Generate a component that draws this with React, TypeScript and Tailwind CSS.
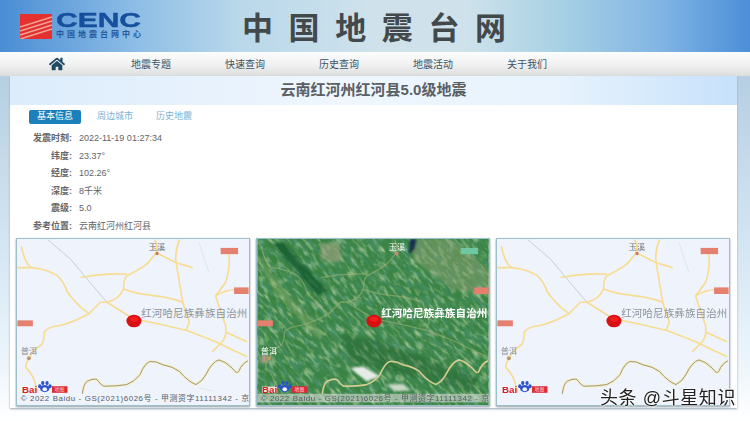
import React from "react";
import { FaHome } from "react-icons/fa";

const cjk = "font-['Liberation_Sans','Noto_Sans_CJK_SC',sans-serif]";

const navItems = ["地震专题", "快速查询", "历史查询", "地震活动", "关于我们"];

const infoRows = [
  { label: "发震时刻:", value: "2022-11-19 01:27:34" },
  { label: "纬度:", value: "23.37°" },
  { label: "经度:", value: "102.26°" },
  { label: "深度:", value: "8千米" },
  { label: "震级:", value: "5.0" },
  { label: "参考位置:", value: "云南红河州红河县" },
];

// roads and borders are in 3x coordinates, traced off the map
const roads = [
  "M60 30 Q70 80 90 95 Q140 100 170 120 Q190 140 200 170 Q230 210 265 235 L300 200 L320 200 Q360 190 370 160 Q370 130 380 120 Q420 100 440 85 L470 50 Q475 30 465 10",
  "M240 125 Q310 110 380 115",
  "M265 235 Q220 260 180 270 Q140 275 130 290 Q130 320 120 330 Q90 350 85 370 Q70 385 75 400 Q95 420 100 440 L110 475",
  "M320 200 L400 250 Q480 265 560 285 Q600 300 650 320 Q700 345 745 365",
  "M370 160 Q410 175 460 180 Q510 185 550 200 Q560 235 570 260 L560 285",
  "M540 10 Q525 50 530 80 Q540 140 550 200 M470 50 L530 80 L580 95",
  "M690 50 Q695 100 680 140 L650 180 Q665 230 680 270 Q685 300 670 320 L640 350",
  "M650 180 Q700 150 745 170 M680 290 L745 320 M48 95 L90 95",
];
const border =
  "M245 478 Q250 445 260 440 Q280 430 290 435 Q300 450 310 455 Q350 455 380 450 Q405 440 420 420 Q435 385 450 380 Q470 378 490 390 Q520 395 540 410 Q565 440 590 450 Q610 440 620 420 Q640 380 660 375 Q680 380 700 400 Q715 420 720 410 Q730 385 748 378";

function BaiduMark({ satellite }: { satellite: boolean }) {
  return (
    <g>
      {satellite && <rect x="62" y="456" width="45" height="19" fill="#e8e4dc" />}
      <text x="62" y="475" fontSize="27" fontWeight="700" fill="#dd1c22" fontFamily="Liberation Sans" textLength="46" lengthAdjust="spacingAndGlyphs">
        Bai
      </text>
      <ellipse cx="131" cy="462" rx="14" ry="11" fill="#2a53c9" />
      <ellipse cx="116" cy="455" rx="5" ry="6" fill="#2a53c9" />
      <ellipse cx="125" cy="445" rx="5" ry="6" fill="#2a53c9" />
      <ellipse cx="138" cy="445" rx="5" ry="6" fill="#2a53c9" />
      <ellipse cx="147" cy="455" rx="5" ry="6" fill="#2a53c9" />
      <ellipse cx="131" cy="464" rx="7" ry="6" fill="#f2f5fb" />
      <rect x="153" y="455" width="47" height="20" fill="#dd2a35" />
      <text x="176" y="471" fontSize="15" fill="#f7d0d0" textAnchor="middle" fontFamily="Noto Sans CJK SC">
        地图
      </text>
    </g>
  );
}

function MapTile({ satellite = false, copyright = true }: { satellite?: boolean; copyright?: boolean }) {
  return (
    <div className="w-[234px] h-[168px] border border-[#9dbfc9] bg-[#eff3fb] overflow-hidden shadow-[0_1px_2px_#8a9aa5]">
      <svg viewBox="48 8 702 504" className="block w-full h-full">
        <defs>
          <filter id="satDark" x="0" y="0" width="100%" height="100%">
            <feTurbulence type="fractalNoise" baseFrequency="0.025 0.08" numOctaves="4" seed="7" />
            <feColorMatrix values="0 0 0 0 0.06  0 0 0 0 0.27  0 0 0 0 0.14  2.4 0 0 0 -0.95" />
          </filter>
          <filter id="satLight" x="0" y="0" width="100%" height="100%">
            <feTurbulence type="fractalNoise" baseFrequency="0.03 0.09" numOctaves="3" seed="23" />
            <feColorMatrix values="0 0 0 0 0.5  0 0 0 0 0.66  0 0 0 0 0.38  1.8 0 0 0 -0.85" />
          </filter>
          <filter id="soft">
            <feGaussianBlur stdDeviation="3" />
          </filter>
        </defs>
        {satellite ? (
          <g>
            <rect x="48" y="8" width="702" height="504" fill="#3a8443" />
            <g transform="rotate(48 400 260)">
              <rect x="-300" y="-400" width="1400" height="1300" filter="url(#satDark)" />
              <rect x="-300" y="-400" width="1400" height="1300" filter="url(#satLight)" />
            </g>
            <g filter="url(#soft)">
              <path d="M90 20 L130 20 L260 165 L230 180 Z" fill="#15592f" opacity="0.75" />
              <path d="M30 30 L120 150 L250 300 L230 310 L100 170 Z" fill="#9db56f" opacity="0.35" />
              <path d="M520 8 L640 8 L750 100 L750 180 L640 160 L520 70 Z" fill="#9aa678" opacity="0.4" />
              <path d="M240 20 L300 20 L300 80 L240 70 Z" fill="#b5a88a" opacity="0.5" />
              <path d="M300 300 L420 320 L720 430 L700 470 L330 380 Z" fill="#17582f" opacity="0.35" />
              <path d="M510 8 L532 8 L525 40 L508 55 Z" fill="#16304e" />
              <path d="M330 400 L370 395 L420 425 L380 440 Z" fill="#e6ece6" />
              <path d="M440 450 L490 448 L515 468 L465 470 Z" fill="#c7d8c5" />
              <path d="M60 360 L75 360 L78 385 L62 385 Z" fill="#b89a86" />
            </g>
            <g stroke="#a9b377" strokeWidth="4" fill="none" opacity="0.55">
              {roads.slice(0, 5).map((d) => (
                <path key={d} d={d} />
              ))}
            </g>
            <path d={border} stroke="#d4cc8f" strokeWidth="5" fill="none" />
          </g>
        ) : (
          <g>
            <path d="M140 10 L210 70 L260 130 L320 200 L390 245" stroke="#bcc6d6" strokeWidth="2.5" fill="none" />
            <path d="M600 20 L630 110 M640 470 L600 460" stroke="#d6deeb" strokeWidth="2" fill="none" />
            <g stroke="#f7dc92" strokeWidth="5" fill="none">
              {roads.map((d) => (
                <path key={d} d={d} />
              ))}
            </g>
            <path d={border} stroke="#f6edc6" strokeWidth="8" fill="none" />
            <path d={border} stroke="#9c9672" strokeWidth="3" fill="none" />
          </g>
        )}

        <rect x="665" y="35" width="53" height="19" fill={satellite ? "#6fc7a0" : "#e5806f"} />
        <rect x="706" y="155" width="44" height="20" fill="#e5806f" />
        <rect x="48" y="255" width="47" height="18" fill="#e5806f" />
        <circle cx="472" cy="52" r="5" fill={satellite ? "#c88a70" : "#d0795f"} />
        <circle cx="83" cy="370" r="6" fill="#b99b6b" />

        <text x="472" y="41" fontSize="25" fill={satellite ? "#fff" : "#6d7478"} textAnchor="middle" fontFamily="Noto Sans CJK SC">
          玉溪
        </text>
        <text x="83" y="357" fontSize="25" fill={satellite ? "#fff" : "#8b959c"} textAnchor="middle" fontFamily="Noto Sans CJK SC">
          普洱
        </text>
        <text x="424" y="244" fontSize="32" fontWeight={satellite ? 700 : 400} fill={satellite ? "#fff" : "#8b959c"} fontFamily="Noto Sans CJK SC" textLength="322">
          红河哈尼族彝族自治州
        </text>

        <ellipse cx="402" cy="257" rx="23" ry="19" fill="#d80f13" />
        <ellipse cx="402" cy="251" rx="13" ry="8" fill="#f21d1d" />

        <BaiduMark satellite={satellite} />
        {copyright && (
          <g>
            {satellite && <rect x="48" y="478" width="702" height="26" fill="#d9dcd6" opacity="0.6" />}
            <text x="58" y="499" fontSize="24" fill="#555c66" fontFamily="Liberation Sans, Noto Sans CJK SC" textLength="694">
              © 2022 Baidu - GS(2021)6026号 - 甲测资字11111342 - 京
            </text>
          </g>
        )}
      </svg>
    </div>
  );
}

export default function App() {
  return (
    <div className={`relative w-[750px] h-[421px] overflow-hidden bg-white blur-[0.4px] ${cjk}`}>
      {/* header */}
      <div className="relative h-[52px] bg-[linear-gradient(90deg,#4a8dd4_0%,#8dbde6_18%,#b9d8ea_32%,#cfe2ec_50%,#cfe2ec_62%,#a9d2e4_74%,#82b5e4_88%,#4b8fd8_100%)]">
        <div className="flex items-center h-full pl-[20px]">
          <div className="w-[32px] h-[25px] rounded-[1px] bg-[#e4312f] overflow-hidden mt-[1px]">
            <svg viewBox="0 0 32 25" className="w-full h-full">
              <path d="M0 13 L32 3 M0 17 L32 7 M0 21 L32 11 M0 25 L32 15" stroke="#f1a498" strokeWidth="1.5" fill="none" />
            </svg>
          </div>
          <div className="ml-[4px] w-[90px]">
            <div className="text-[20px] leading-[15px] font-bold text-[#16509c] origin-left scale-x-[1.5] h-[15px] w-[58px] [-webkit-text-stroke:0.4px_#16509c]">CENC</div>
            <div className="text-[8px] leading-[9px] mt-[2px] text-[#25589a] font-bold tracking-[3px] whitespace-nowrap">中国地震台网中心</div>
          </div>
        </div>
        <div className="absolute top-[3px] left-[242px] text-[31px] leading-[46px] font-bold text-[#43494b] tracking-[15.6px] whitespace-nowrap font-['Noto_Sans_CJK_SC',sans-serif]">
          中国地震台网
        </div>
      </div>

      {/* nav */}
      <div className="flex h-[24px] pl-[10px] items-center bg-[linear-gradient(180deg,#fbfcfc_0%,#f1f2f1_50%,#dcdedd_100%)]">
        <div className="w-[94px] flex justify-center text-[#1f4a63] text-[16px]">
          <FaHome />
        </div>
        {navItems.map((item) => (
          <div key={item} className="w-[94px] text-center text-[10px] text-[#3f5364]">
            {item}
          </div>
        ))}
      </div>

      {/* body */}
      <div className="h-[345px] bg-[linear-gradient(180deg,#b6cfe2_0%,#d5e6f3_50%,#eef6fb_85%,#ffffff_100%)] pl-[10px] pr-[13px]">
        <div className="h-[332px] bg-white shadow-[0_1px_2px_#9aa7b0]">
          <div className="h-[29px] flex items-center justify-center bg-[linear-gradient(90deg,#dcecfb_0%,#eff6fe_45%,#e8f3fd_75%,#c7e1fb_100%)] text-[15px] font-bold text-[#5a5f64]">
            云南红河州红河县5.0级地震
          </div>

          <div className="flex items-center h-[14px] mt-[5px] ml-[19px] text-[9px]">
            <div className="w-[52px] h-[14px] rounded-[2px] bg-[#1b7fb9] text-white flex items-center justify-center">基本信息</div>
            <div className="ml-[16px] w-[36px] text-[#7db0d2] whitespace-nowrap">周边城市</div>
            <div className="ml-[23px] w-[36px] text-[#7db0d2] whitespace-nowrap">历史地震</div>
          </div>

          <div className="mt-[6px] flex flex-col text-[9px]">
            {infoRows.map((row) => (
              <div key={row.label} className="flex items-center h-[17.6px]">
                <div className="w-[62px] text-right font-bold text-[#666]">{row.label}</div>
                <div className="ml-[7px] text-[#606468]">{row.value}</div>
              </div>
            ))}
          </div>

          <div className="flex gap-[6px] ml-[6px] mt-[2px]">
            <MapTile />
            <MapTile satellite />
            <MapTile copyright={false} />
          </div>
        </div>
      </div>

      {/* toutiao watermark */}
      <div className="absolute left-[600px] top-[387px] text-[18px] leading-[22px] tracking-[0.6px] text-[#222] whitespace-nowrap [text-shadow:0_0_2px_#fff,0_0_2px_#fff,0_0_2px_#fff]">
        头条 @斗星知识
      </div>
    </div>
  );
}
